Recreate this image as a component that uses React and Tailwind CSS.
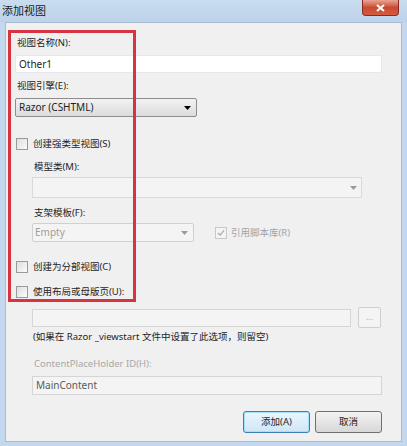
import React from 'react';

const font = 'font-["Segoe_UI","Noto_Sans","Noto_Sans_CJK_SC",sans-serif]';

const CheckBox = ({ checked = false, disabled = false }) => (
	<span
		className={`flex items-center justify-center w-[12px] h-[12px] border ${
			disabled ? 'border-[#c8c8c8] bg-[#f4f4f4]' : 'border-[#9a9a9a] bg-gradient-to-br from-[#dedede] to-[#fbfbfb]'
		}`}
	>
		{ checked && (
			<svg width="8" height="8" viewBox="0 0 9 9">
				<path d="M1 4.5 L3.5 7 L8 1.5" fill="none" stroke={ disabled ? '#a8a8a8' : '#333' } strokeWidth="1.3" />
			</svg>
		) }
	</span>
);

const Arrow = ({ color = '#000' }) => (
	<svg width="7" height="4" viewBox="0 0 7 4">
		<path d="M0 0 H7 L3.5 4 Z" fill={ color } />
	</svg>
);

// CJK text reads a bit smaller than the latin text in the dialog
const Label = ({ children, className = '', disabled = false }) => (
	<div className={`h-4 leading-4 text-[9.5px] ${ disabled ? 'text-[#a8a8a8]' : 'text-[#1e1e1e]' } ${ className }`}>
		{ children }
	</div>
);

const App = () => {
	return (
		<div className={`relative w-[407px] h-[446px] bg-[#c3d8ee] overflow-hidden ${ font }`}>
			{/* title bar */}
			<div className="relative h-[22px] flex items-center pl-[2px] bg-gradient-to-b from-[#c9dcf0] to-[#bed3ea]">
				<span className="text-[11px] text-[#1a1a1a] leading-4">添加视图</span>
				<div className="absolute right-[8px] top-0 w-[37px] h-[16px] rounded-b-[4px] border border-[#8c2a20] border-t-0 bg-gradient-to-b from-[#e8a493] via-[#c94a32] to-[#d65a3d] flex items-center justify-center">
					<svg width="9" height="8" viewBox="0 0 9 8">
						<path d="M1 1 L8 7 M8 1 L1 7" stroke="#fff" strokeWidth="2" />
					</svg>
				</div>
			</div>

			{/* client area */}
			<div className="mx-[5px] h-[420px] bg-[#f0f0f0] border border-[#a9bcd3] pl-[9px] pt-[12px] flex flex-col">
				<Label className="pl-[2px]">视图名称(N):</Label>
				<div className="mt-[4px] w-[367px] h-[18px] bg-white border border-[#e3e9ef] flex items-center px-[3px] text-[10px] text-[#1e1e1e]">
					Other1
				</div>

				<Label className="mt-[5px] pl-[2px]">视图引擎(E):</Label>
				<div className="mt-[4px] w-[182px] h-[19px] border border-[#8c8c8c] rounded-[2px] bg-gradient-to-b from-[#f2f2f2] to-[#dcdcdc] flex items-center justify-between pl-[3px] pr-[5px] text-[10px] text-[#1e1e1e]">
					<span>Razor (CSHTML)</span>
					<Arrow />
				</div>

				<div className="mt-[19px] h-4 flex items-center gap-[5px] pl-[1px]">
					<CheckBox />
					<span className="text-[9.5px] text-[#1e1e1e] leading-4">创建强类型视图(S)</span>
				</div>

				<div className="pl-[17px] flex flex-col">
					<Label className="mt-[7px] pl-[2px]">模型类(M):</Label>
					<div className="mt-[2px] w-[330px] h-[21px] border border-[#d9d9d9] bg-[#f4f4f4] flex items-center justify-end pr-[4px]">
						<Arrow color="#9a9a9a" />
					</div>

					<Label className="mt-[7px] pl-[2px]">支架模板(F):</Label>
					<div className="mt-[2px] flex items-center gap-[21px]">
						<div className="w-[162px] h-[19px] border border-[#d0d0d0] rounded-[2px] bg-[#f4f4f4] flex items-center justify-between pl-[2px] pr-[5px] text-[10px] text-[#9d9d9d]">
							<span>Empty</span>
							<Arrow color="#9a9a9a" />
						</div>
						<div className="flex items-center gap-[4px]">
							<CheckBox checked disabled />
							<span className="text-[9.5px] text-[#a4a4a4] leading-4">引用脚本库(R)</span>
						</div>
					</div>
				</div>

				<div className="mt-[17px] h-4 flex items-center gap-[5px] pl-[1px]">
					<CheckBox />
					<span className="text-[9.5px] text-[#1e1e1e] leading-4">创建为分部视图(C)</span>
				</div>
				<div className="mt-[9px] h-4 flex items-center gap-[5px] pl-[1px]">
					<CheckBox />
					<span className="text-[9.5px] text-[#1e1e1e] leading-4">使用布局或母版页(U):</span>
				</div>

				<div className="pl-[17px] flex flex-col">
					<div className="mt-[7px] flex items-center gap-[7px]">
						<div className="w-[319px] h-[18px] border border-[#d5d5d5] bg-[#f4f4f4]" />
						<div className="w-[23px] h-[21px] border border-[#cfcfcf] rounded-[2px] bg-[#f4f4f4] flex items-center justify-center text-[9px] text-[#b0b0b0] leading-none pb-[2px]">
							...
						</div>
					</div>
					<Label className="mt-[1px] pl-[1px]">
						(如果在 Razor _viewstart 文件中设置了此选项，则留空)
					</Label>

					<Label className="mt-[11px] pl-[2px]" disabled>ContentPlaceHolder ID(H):</Label>
					<div className="mt-[4px] w-[350px] h-[19px] border border-[#d5d5d5] bg-[#f4f4f4] flex items-center px-[3px] text-[10px] text-[#5a5a5a]">
						MainContent
					</div>

					<div className="mt-[16px] flex justify-end gap-[5px] w-[350px]">
						<div className="w-[67px] h-[22px] rounded-[3px] border border-[#3c7fb1] shadow-[inset_0_0_0_1px_#a6e0f8] bg-gradient-to-b from-[#eaf6fd] to-[#cfe6f5] flex items-center justify-center text-[9.5px] text-[#1e1e1e]">
							添加(A)
						</div>
						<div className="w-[67px] h-[22px] rounded-[3px] border border-[#707070] bg-gradient-to-b from-[#f2f2f2] to-[#d8d8d8] flex items-center justify-center text-[9.5px] text-[#1e1e1e]">
							取消
						</div>
					</div>
				</div>
			</div>

			{/* annotation box */}
			<div className="absolute left-[8px] top-[30px] w-[128px] h-[272px] border-[3px] border-[#d8343f] pointer-events-none" />
		</div>
	);
};

export default App;
